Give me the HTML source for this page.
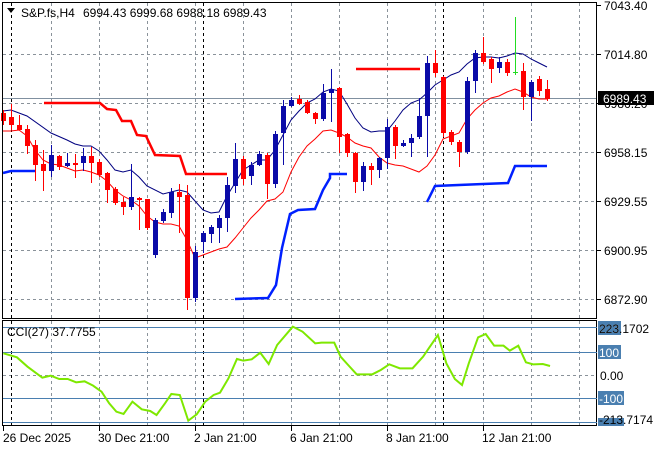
<!DOCTYPE html>
<html><head><meta charset="utf-8"><style>
html,body{margin:0;padding:0;background:#fff;width:660px;height:450px;overflow:hidden}
svg{display:block;font-family:"Liberation Sans",sans-serif}
</style></head><body>
<svg width="660" height="450" viewBox="0 0 660 450" xmlns="http://www.w3.org/2000/svg">
<rect width="660" height="450" fill="#fff"/>
<g stroke="#8a929a" stroke-width="1" stroke-dasharray="3,3" fill="none">
<path d="M51.5 3V318M99.5 3V318M147.5 3V318M195.5 3V318M243.5 3V318M291.5 3V318M339.5 3V318M387.5 3V318M435.5 3V318M483.5 3V318M531.5 3V318M579.5 3V318"/>
<path d="M3 54.5H597M3 103.5H597M3 152.5H597M3 201.5H597M3 250.5H597M3 299.5H597"/>
<path d="M51.5 321V425M99.5 321V425M147.5 321V425M195.5 321V425M243.5 321V425M291.5 321V425M339.5 321V425M387.5 321V425M435.5 321V425M483.5 321V425M531.5 321V425M579.5 321V425M3 375.5H597"/>
</g>
<g stroke="#000" stroke-width="1" stroke-dasharray="3,3">
<path d="M11.5 3V318M203.5 3V318M443.5 3V318M11.5 321V425M203.5 321V425M443.5 321V425"/>
</g>
<line x1="3" y1="98.5" x2="597" y2="98.5" stroke="#8090a0"/>
<polyline fill="none" stroke="#f00" stroke-width="2.5" points="44,103 100,103 107,109 116,110 122,121 131,121 137,135 146,136 155,155 180,156 186,174 227,174"/>
<line x1="356" y1="69" x2="420" y2="69" stroke="#f00" stroke-width="2.5"/>
<polyline fill="none" stroke="#0020ff" stroke-width="2.5" points="3,173 11,171 35,171"/>
<polyline fill="none" stroke="#0020ff" stroke-width="2.5" points="235,299 268,298 276,285 282,248 290,214 298,210 315,209 323,190 330,178 330,174 347,174"/>
<polyline fill="none" stroke="#0020ff" stroke-width="2.5" points="427,202 435,186 483,184 508,183 515,166 547,166"/>
<polyline fill="none" stroke="#000080" stroke-width="1" points="3,111 11,110 27,116 51,133 67,140 75,144 83,146 91,146 99,151 107,160 115,170 123,172 131,170 139,177 147,186 163,194 179,190 187,192 195,201 203,210 211,213 219,212 227,196 235,183 243,170 251,165 259,160 267,160 275,150 283,135 291,120 299,111 307,103 315,99 323,92 331,89 339,91 347,104 355,118 363,128 371,132 379,131 387,131 395,121 403,110 411,103 419,100 427,93 435,85 443,80 451,75 459,72 467,64 475,58 483,57 491,57 499,58 507,56 515,53 523,54 531,59 539,63 547,67"/>
<polyline fill="none" stroke="#f00" stroke-width="1" points="3,131 11,131 19,130 27,136 35,150 43,160 51,164 59,165 67,168 75,171 83,170 91,172 99,175 107,181 115,190 123,196 131,200 139,206 147,216 155,222 163,224 171,224 179,226 187,240 195,258 203,255 211,252 219,249 227,247 235,238 243,228 251,218 259,210 267,201 275,199 283,192 291,172 299,157 307,146 315,139 323,131 331,130 339,133 347,137 355,143 363,146 371,148 379,157 387,163 395,165 403,166 411,169 419,172 427,166 435,155 443,139 451,136 459,133 467,119 475,110 483,103 491,98 499,96 507,92 515,89 523,92 531,97 539,99 547,99"/>
<g fill="#f00" stroke="#f00">
<path stroke-width="1" d="M3.5 110V125M11.5 104V130M19.5 115V130M27.5 125V154M35.5 140V181M43.5 150V191M59.5 155V170M75.5 154V178M91.5 147V183M99.5 159V177M107.5 172V203M115.5 187V205M123.5 197V215M139.5 197V230M147.5 199V230M179.5 184V233M187.5 185V310M243.5 156V185M267.5 153V199M299.5 95V105M307.5 100V114M315.5 112V124M339.5 87V153M347.5 133V157M355.5 152V193M371.5 163V185M395.5 125V159M435.5 50V77M443.5 76V137M451.5 130V145M459.5 140V167M483.5 37V64M491.5 57V83M507.5 59V76M523.5 63V110M539.5 76V96M547.5 80V101"/>
<g stroke="none">
<rect x="1" y="113" width="5" height="8"/><rect x="9" y="117" width="5" height="8"/><rect x="17" y="125" width="5" height="5"/><rect x="25" y="129" width="5" height="17"/><rect x="33" y="145" width="5" height="20"/><rect x="41" y="164" width="5" height="7"/><rect x="57" y="156" width="5" height="11"/><rect x="73" y="163" width="5" height="2"/><rect x="89" y="156" width="5" height="7"/><rect x="97" y="162" width="5" height="13"/><rect x="105" y="173" width="5" height="17"/><rect x="113" y="189" width="5" height="14"/><rect x="121" y="202" width="5" height="5"/><rect x="137" y="198" width="5" height="2"/><rect x="145" y="199" width="5" height="29"/><rect x="177" y="192" width="5" height="5"/><rect x="185" y="195" width="5" height="103"/><rect x="241" y="159" width="5" height="20"/><rect x="265" y="155" width="5" height="29"/><rect x="297" y="99" width="5" height="5"/><rect x="305" y="102" width="5" height="11"/><rect x="313" y="113" width="5" height="6"/><rect x="337" y="88" width="5" height="49"/><rect x="345" y="134" width="5" height="19"/><rect x="353" y="153" width="5" height="29"/><rect x="369" y="166" width="5" height="4"/><rect x="393" y="127" width="5" height="19"/><rect x="433" y="63" width="5" height="10"/><rect x="441" y="77" width="5" height="56"/><rect x="449" y="132" width="5" height="10"/><rect x="457" y="142" width="5" height="10"/><rect x="481" y="53" width="5" height="9"/><rect x="489" y="59" width="5" height="10"/><rect x="505" y="62" width="5" height="11"/><rect x="521" y="71" width="5" height="26"/><rect x="537" y="79" width="5" height="12"/><rect x="545" y="89" width="5" height="10"/>
</g></g>
<g fill="#0a0aa8" stroke="#0a0aa8">
<path stroke-width="1" d="M51.5 145V177M67.5 153V167M83.5 148V171M131.5 164V210M155.5 218V258M163.5 209V223M171.5 188V218M195.5 246V302M203.5 231V253M211.5 225V243M219.5 215V243M227.5 177V232M235.5 143V193M251.5 162V185M259.5 151V166M275.5 131V188M283.5 100V165M291.5 97V107M323.5 84V121M331.5 69V122M363.5 162V191M379.5 157V178M387.5 119V169M403.5 140V147M411.5 134V157M419.5 98V139M427.5 56V157M467.5 77V154M475.5 50V93M499.5 57V73M531.5 80V121"/>
<g stroke="none">
<rect x="49" y="155" width="5" height="16"/><rect x="65" y="163" width="5" height="3"/><rect x="81" y="156" width="5" height="7"/><rect x="129" y="197" width="5" height="10"/><rect x="153" y="220" width="5" height="35"/><rect x="161" y="212" width="5" height="9"/><rect x="169" y="192" width="5" height="21"/><rect x="193" y="252" width="5" height="46"/><rect x="201" y="233" width="5" height="9"/><rect x="209" y="227" width="5" height="7"/><rect x="217" y="218" width="5" height="10"/><rect x="225" y="185" width="5" height="33"/><rect x="233" y="159" width="5" height="27"/><rect x="249" y="165" width="5" height="11"/><rect x="257" y="154" width="5" height="11"/><rect x="273" y="134" width="5" height="50"/><rect x="281" y="106" width="5" height="27"/><rect x="289" y="100" width="5" height="6"/><rect x="321" y="93" width="5" height="26"/><rect x="329" y="89" width="5" height="4"/><rect x="361" y="166" width="5" height="16"/><rect x="377" y="158" width="5" height="12"/><rect x="385" y="127" width="5" height="31"/><rect x="401" y="143" width="5" height="3"/><rect x="409" y="138" width="5" height="5"/><rect x="417" y="116" width="5" height="21"/><rect x="425" y="63" width="5" height="53"/><rect x="465" y="81" width="5" height="71"/><rect x="473" y="53" width="5" height="28"/><rect x="497" y="62" width="5" height="6"/><rect x="529" y="82" width="5" height="15"/>
</g></g>
<path d="M515.5 17V75M513 72.5H518" stroke="#22dd22" stroke-width="1"/>
<rect x="2.5" y="2.5" width="594" height="316" fill="none" stroke="#000"/>
<rect x="2.5" y="320.5" width="594" height="105" fill="none" stroke="#000"/>
<path d="M7 8H15L11 13Z" fill="#000"/>
<text x="21" y="17" font-size="12" fill="#000">S&amp;P.fs,H4</text>
<text x="83" y="17" font-size="12" fill="#000">6994.43 6999.68 6988.18 6989.43</text>
<g font-size="12" fill="#000">
<text x="604" y="10">7043.40</text>
<text x="604" y="59">7014.80</text>
<text x="604" y="108">6986.20</text>
<text x="604" y="157">6958.15</text>
<text x="604" y="206">6929.55</text>
<text x="604" y="255">6900.95</text>
<text x="604" y="304">6872.90</text>
</g>
<g stroke="#000"><path d="M597 5.5H601M597 54.5H601M597 103.5H601M597 152.5H601M597 201.5H601M597 250.5H601M597 299.5H601"/></g>
<rect x="598" y="91" width="56" height="14" fill="#000"/>
<text x="603" y="103" font-size="12" fill="#fff">6989.43</text>
<g stroke="#4a7fb0" stroke-width="1"><path d="M3 327.5H597M3 352.5H597M3 398.5H597M3 422.5H597"/></g>
<g transform="translate(0,310) scale(0.4231,0.3333)">
<polyline fill="none" stroke="#7ee800" stroke-width="2" vector-effect="non-scaling-stroke" points="8,130 40,142 65,170 100,203 120,197 140,207 160,207 180,217 200,214 220,227 240,245 258,280 275,305 292,312 313,275 335,298 355,303 370,315 390,280 405,252 425,255 445,332 465,313 485,275 505,255 520,248 540,205 560,147 575,152 595,148 615,128 635,162 655,105 692,50 715,65 745,100 760,98 790,98 805,140 825,168 843,193 880,193 900,180 920,163 945,175 975,175 1000,140 1015,112 1035,75 1055,160 1075,207 1092,225 1108,160 1130,82 1148,72 1168,107 1190,107 1205,122 1225,107 1243,157 1260,163 1283,162 1300,168"/>
</g>
<text x="7" y="336" font-size="12" fill="#000">CCI(27) 37.7755</text>
<g font-size="12">
<rect x="598" y="321" width="23" height="14" fill="#4a7fb0"/>
<text x="599" y="333" fill="#fff">223</text>
<text x="599" y="333" fill="#000">223.1702</text>
<rect x="598" y="345" width="23" height="14" fill="#4a7fb0"/>
<text x="599" y="357" fill="#fff">100</text>
<text x="600" y="380" fill="#000">0.00</text>
<rect x="598" y="391" width="26" height="14" fill="#4a7fb0"/>
<text x="599" y="403" fill="#fff">-100</text>
<rect x="598" y="418" width="26" height="8" fill="#4a7fb0"/>
<text x="599" y="424" fill="#000">-213.7174</text>
</g>
<g stroke="#000"><path d="M3.5 426V431M99.5 426V431M195.5 426V431M291.5 426V431M387.5 426V431M483.5 426V431"/></g>
<g font-size="12" fill="#000">
<text x="3" y="442">26 Dec 2025</text>
<text x="98" y="442">30 Dec 21:00</text>
<text x="194" y="442">2 Jan 21:00</text>
<text x="290" y="442">6 Jan 21:00</text>
<text x="386" y="442">8 Jan 21:00</text>
<text x="482" y="442">12 Jan 21:00</text>
</g>
</svg>
</body></html>
